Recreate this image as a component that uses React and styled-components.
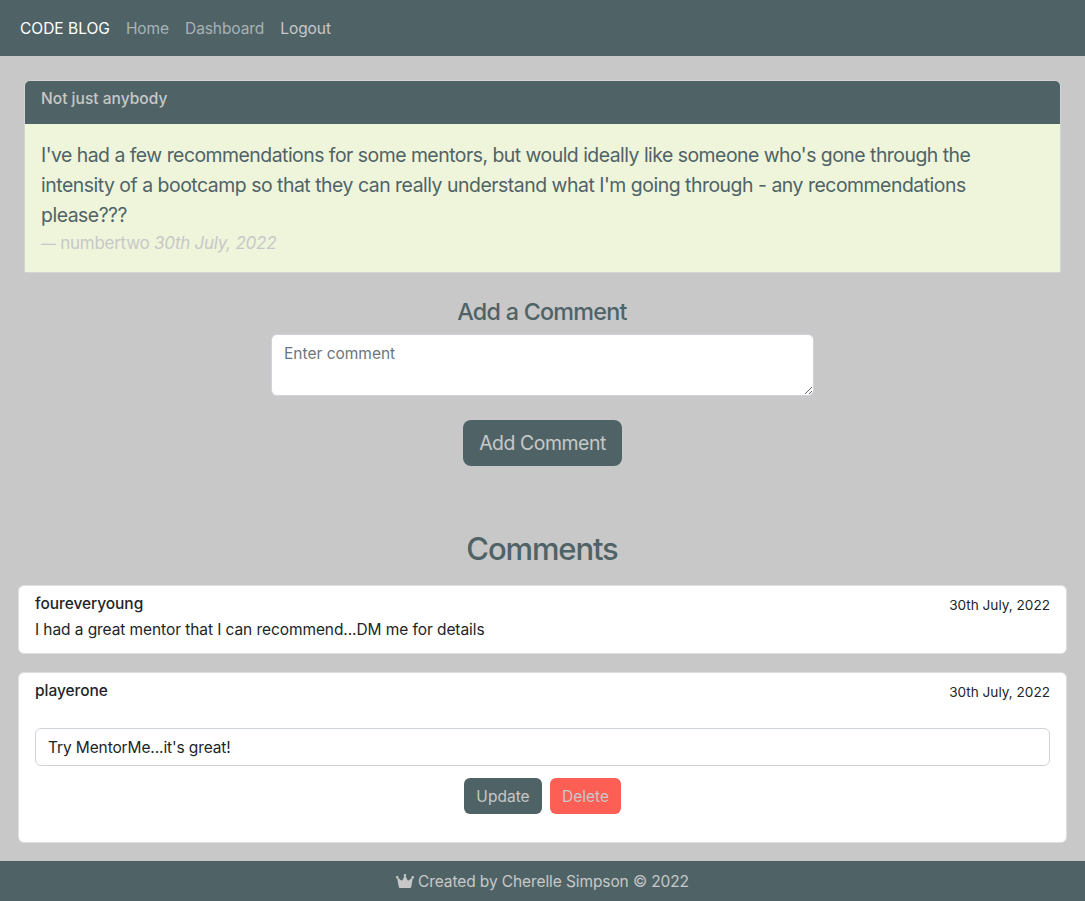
import React from 'react';
import styled, { createGlobalStyle } from 'styled-components';

const teal = '#4f6367';
const grey = '#c8c8c8';
const ink = '#212529';

const GlobalStyle = createGlobalStyle`
  *, *::before, *::after { box-sizing: border-box; }
  body {
    margin: 0;
    background: ${grey};
    color: ${ink};
    font: 400 15.5px/24px Inter, "Liberation Sans", sans-serif;
    letter-spacing: -0.08px;
  }
  h2, h3, p, blockquote, figure { margin: 0; font-weight: inherit; }
`;

const Page = styled.div`
  min-height: 901px;
  display: flex;
  flex-direction: column;
`;

const Navbar = styled.nav`
  height: 56px;
  padding: 2px 20px 0;
  display: flex;
  align-items: center;
  gap: 16px;
  background: ${teal};
`;

const Brand = styled.a`
  color: #fff;
  letter-spacing: 0;
`;

const NavLink = styled.a`
  color: ${(p) => (p.$bright ? grey : '#a8b2b4')};
`;

const Main = styled.main`
  flex: 1;
  display: flex;
  flex-direction: column;
  align-items: stretch;
  padding: 24px 18px 18px;
`;

const Post = styled.article`
  margin: 0 6px;
  border: 1px solid #d4d4d4;
  border-radius: 6px 6px 2px 2px;
  overflow: hidden;
`;

const PostTitle = styled.header`
  height: 43px;
  padding: 6px 16px 0;
  background: ${teal};
  color: ${grey};
  font-weight: 500;
  letter-spacing: 0.03px;
`;

const Quote = styled.blockquote`
  padding: 16px;
  background: #eef5db;
  color: ${teal};
  font-size: 19.4px;
  line-height: 30px;
`;

const QuoteLine = styled.span`
  display: block;
  letter-spacing: ${(p) => p.$tracking}px;
`;

const Byline = styled.footer`
  color: ${grey};
  font-size: 17px;
  line-height: 26px;
  letter-spacing: -0.27px;

  cite { letter-spacing: -0.25px; }
`;

const Dash = styled.span`
  font-size: 15px;
  line-height: 1;
`;

const CommentForm = styled.form`
  width: 543px;
  margin: 24px auto 0;
  display: flex;
  flex-direction: column;
  align-items: center;
`;

const FormTitle = styled.h3`
  padding-right: 1px;
  color: ${teal};
  font-size: 23.3px;
  font-weight: 500;
  line-height: 29px;
  letter-spacing: -0.73px;
`;

const CommentBox = styled.textarea`
  display: block;
  width: 100%;
  height: 62px;
  margin: 8px 0 24px;
  padding: 7px 12px 5px;
  border: 1px solid #ced4da;
  border-radius: 6px;
  background: #fff;
  color: ${ink};
  font: inherit;
  letter-spacing: 0;
  resize: vertical;
  overflow: auto;

  &::placeholder { color: #6c757d; opacity: 1; }
`;

const Button = styled.button`
  width: ${(p) => p.$width}px;
  height: ${(p) => (p.$large ? 46 : 36)}px;
  padding: ${(p) => (p.$large ? 0 : '2px 0 0')};
  border: 0;
  border-radius: ${(p) => (p.$large ? 8 : 6)}px;
  background: ${(p) => (p.$danger ? '#fe5f55' : teal)};
  color: ${grey};
  font: inherit;
  font-size: ${(p) => (p.$large ? 19.4 : 15.5)}px;
  letter-spacing: ${(p) => (p.$large ? -0.43 : 0.03)}px;
`;

const SectionTitle = styled.h2`
  margin: 64px 0 17px;
  padding-right: 1px;
  color: ${teal};
  font-size: 31px;
  font-weight: 500;
  line-height: 38px;
  letter-spacing: -1.12px;
  text-align: center;
`;

const CommentList = styled.section`
  display: flex;
  flex-direction: column;
  gap: 18px;
`;

const Comment = styled.article`
  height: ${(p) => (p.$editable ? 171 : 69)}px;
  padding: 6px 16px 0;
  border: 1px solid #dedede;
  border-radius: 6px;
  background: #fff;
`;

const CommentHead = styled.header`
  display: flex;
  justify-content: space-between;
  align-items: center;
  margin-bottom: 2px;
`;

const Author = styled.span`
  font-weight: 500;
  letter-spacing: -0.05px;
`;

const DateText = styled.small`
  padding-top: 3px;
  font-size: 13.6px;
  line-height: 21px;
  letter-spacing: 0;
`;

const EditInput = styled.input`
  display: block;
  width: 100%;
  height: 38px;
  margin-top: 25px;
  padding: 6px 12px;
  border: 1px solid #ced4da;
  border-radius: 6px;
  background: #fff;
  color: ${ink};
  font: inherit;
  letter-spacing: -0.12px;
`;

const Actions = styled.div`
  display: flex;
  justify-content: center;
  gap: 8px;
  margin-top: 12px;
`;

const PageFooter = styled.footer`
  height: 40px;
  display: flex;
  align-items: center;
  justify-content: center;
  gap: 4px;
  background: ${teal};
  color: ${grey};
  letter-spacing: -0.1px;
`;

const FooterText = styled.span`
  padding-top: 2px;
`;

const Crown = () => (
  <svg width="18" height="16" viewBox="0 0 576 512" fill="currentColor" aria-hidden="true">
    <path d="M576 136c0 22.09-17.91 40-40 40c-.248 0-.4551-.1266-.7031-.1305l-50.52 277.9C482 468.9 468.8 480 453.3 480H122.7c-15.46 0-28.72-11.06-31.48-26.27L40.71 175.9C40.46 175.9 40.25 176 40 176c-22.09 0-40-17.91-40-40S17.91 96 40 96s40 17.91 40 40c0 8.998-3.521 16.89-8.537 23.57l89.63 71.7c15.91 12.73 39.5 7.544 48.61-10.68l57.6-115.2C255.1 98.34 248 86.34 248 72C248 49.91 265.9 32 288 32s40 17.91 40 40c0 14.34-7.963 26.34-19.3 33.4l57.6 115.2c9.111 18.22 32.71 23.4 48.61 10.68l89.63-71.7C499.5 152.9 496 144.1 496 136C496 113.9 513.9 96 536 96S576 113.9 576 136z" />
  </svg>
);

export default function App() {
  return (
    <Page>
      <GlobalStyle />
      <Navbar>
        <Brand>CODE BLOG</Brand>
        <NavLink>Home</NavLink>
        <NavLink>Dashboard</NavLink>
        <NavLink $bright>Logout</NavLink>
      </Navbar>
      <Main>
        <Post>
          <PostTitle>Not just anybody</PostTitle>
          <Quote>
            <p>
              <QuoteLine $tracking={-0.505}>
                I've had a few recommendations for some mentors, but would ideally like someone who's gone through the
              </QuoteLine>
              <QuoteLine $tracking={-0.47}>
                intensity of a bootcamp so that they can really understand what I'm going through - any recommendations
              </QuoteLine>
              <QuoteLine $tracking={-0.47}>please???</QuoteLine>
            </p>
            <Byline>
              <Dash>—</Dash> numbertwo <cite>30th July, 2022</cite>
            </Byline>
          </Quote>
        </Post>
        <CommentForm>
          <FormTitle>Add a Comment</FormTitle>
          <CommentBox placeholder="Enter comment" />
          <Button type="button" $large $width={159}>Add Comment</Button>
        </CommentForm>
        <SectionTitle>Comments</SectionTitle>
        <CommentList>
          <Comment>
            <CommentHead>
              <Author>foureveryoung</Author>
              <DateText>30th July, 2022</DateText>
            </CommentHead>
            <p>I had a great mentor that I can recommend...DM me for details</p>
          </Comment>
          <Comment $editable>
            <CommentHead>
              <Author>playerone</Author>
              <DateText>30th July, 2022</DateText>
            </CommentHead>
            <EditInput defaultValue="Try MentorMe...it's great!" />
            <Actions>
              <Button type="button" $width={78}>Update</Button>
              <Button type="button" $danger $width={71}>Delete</Button>
            </Actions>
          </Comment>
        </CommentList>
      </Main>
      <PageFooter>
        <Crown />
        <FooterText>Created by Cherelle Simpson © 2022</FooterText>
      </PageFooter>
    </Page>
  );
}
